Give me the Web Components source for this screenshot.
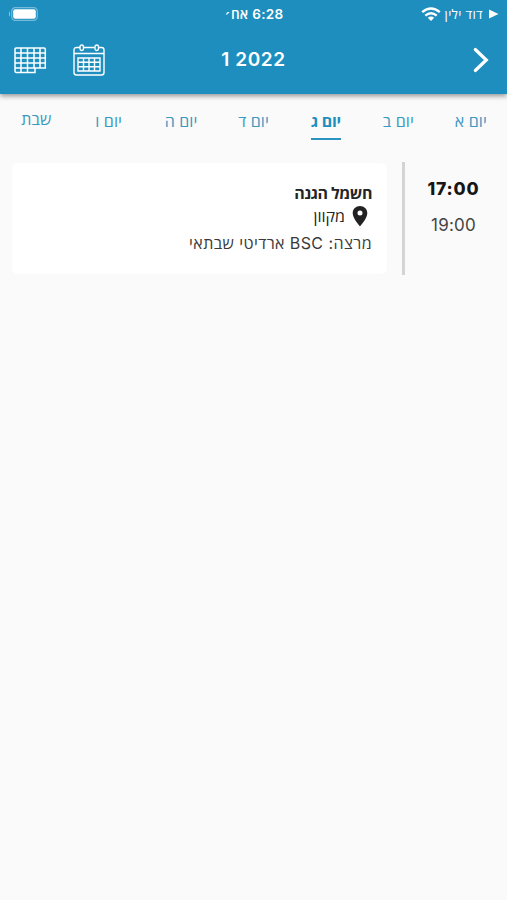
<!DOCTYPE html>
<html lang="he" dir="rtl">
<head>
<meta charset="utf-8">
<meta name="viewport" content="width=device-width">
<title>1 2022</title>
<style>
  body {
    margin: 0;
    background: #fafafa;
    color: #252525;
    font-family: Inter, "Open Sans", "Noto Sans", "DejaVu Sans", sans-serif;
  }
</style>
</head>
<body>
<schedule-app>
  <app-header slot="header" heading="1 2022">
    <status-bar slot="status" carrier="דוד ילין" time="6:28 אח׳"></status-bar>
  </app-header>
  <day-tabs slot="tabs">
    <day-tab>יום א</day-tab>
    <day-tab>יום ב</day-tab>
    <day-tab selected>יום ג</day-tab>
    <day-tab>יום ד</day-tab>
    <day-tab>יום ה</day-tab>
    <day-tab>יום ו</day-tab>
    <day-tab raised>שבת</day-tab>
  </day-tabs>
  <lesson-row start="17:00" end="19:00">
    <span slot="title">חשמל הגנה</span>
    <span slot="place">מקוון</span>
    <span slot="teacher">מרצה: BSC ארדיטי שבתאי</span>
  </lesson-row>
</schedule-app>

<script>
class BaseElement extends HTMLElement {
  constructor() {
    super();
    this.attachShadow({ mode: "open" });
  }

  connectedCallback() {
    this.shadowRoot.innerHTML = this.render();
  }
}

class ScheduleApp extends BaseElement {
  render() {
    return /*html*/`
      <style>
        :host { display: flex; flex-direction: column; height: 900px; overflow: hidden; }
      </style>
      <slot name="header"></slot>
      <slot name="tabs"></slot>
      <slot></slot>`;
  }
}

class StatusBar extends BaseElement {
  render() {
    return /*html*/`
      <style>
        :host {
          display: grid;
          grid-template-columns: 1fr auto 1fr;
          align-items: center;
          height: 27px;
          padding: 0 8px 0 9px;
          font-size: 13px;
        }
        .carrier { display: flex; align-items: center; }
        .name { margin: 0 5px 0 4px; font-size: 13px; font-weight: 500; line-height: 16px; letter-spacing: .35px; }
        .time { font-size: 13.5px; font-weight: 600; line-height: 16px; letter-spacing: .3px; }
        .battery { justify-self: end; }
        svg { display: block; }
      </style>
      <div class="carrier">
        <svg width="11" height="10" viewBox="0 0 11 10"><path d="M1 .5 10.500 5 1 9.500z" fill="#fff"/></svg>
        <span class="name">${this.getAttribute("carrier")}</span>
        <svg width="20" height="14" viewBox="0 0 20 14" fill="none" stroke="#fff" stroke-width="2.4">
          <path d="M1.2 5.2Q10-2.2 18.8 5.2M4.3 8.6Q10 3.8 15.7 8.6"/>
          <path d="M6.8 10.7Q10 8.2 13.2 10.7L10 14z" fill="#fff" stroke="none"/>
        </svg>
      </div>
      <span class="time">${this.getAttribute("time")}</span>
      <svg class="battery" width="30" height="14" viewBox="0 0 30 14">
        <path d="M1 4.500v5Q-.3 9 -.3 7T1 4.500z" fill="#8ac4df"/>
        <rect x="2.7" y=".7" width="25.6" height="12.6" rx="3.6" fill="none" stroke="#76bada" stroke-width="1.2"/>
        <rect x="4.2" y="2.3" width="22.6" height="9.4" rx="2" fill="#fff"/>
      </svg>`;
  }
}

class AppHeader extends BaseElement {
  render() {
    return /*html*/`
      <style>
        :host {
          display: block;
          height: 94px;
          flex: none;
          background: #1e8ebe;
          color: #fff;
          box-shadow: 0 2px 5px rgba(0, 0, 0, .42);
        }
        .bar {
          display: grid;
          grid-template-columns: 1fr auto 1fr;
          align-items: center;
          height: 65px;
          padding: 0 14px;
        }
        .back { margin-right: 4px; }
        h1 { margin: 0; font-size: 19px; font-weight: 600; line-height: 24px; letter-spacing: .6px; direction: ltr; }
        .actions { display: flex; justify-content: flex-end; gap: 26px; }
        svg { display: block; fill: none; stroke: #fff; }
      </style>
      <slot name="status"></slot>
      <div class="bar">
        <svg class="back" width="16" height="26" viewBox="0 0 16 26" stroke-width="3.2" stroke-linecap="round"><path d="M2.300 2.500 13.300 13 2.300 23.500"/></svg>
        <h1>${this.getAttribute("heading")}</h1>
        <div class="actions">
          <svg width="32" height="32" viewBox="0 0 32 32" stroke="#eef8fc" stroke-width="1.4">
            <path d="M7 3.500H3.500Q1 3.500 1 6V28.500Q1 31 3.500 31H28.500Q31 31 31 28.500V6Q31 3.500 28.500 3.500H25.500M10.500 3.500H21.500M1 9.500H31"/>
            <rect x="7" y="1" width="3.500" height="5.500" rx="1.700"/>
            <rect x="22" y="1" width="3.500" height="5.500" rx="1.700"/>
            <path d="M5 14H27V27H5zM5 18.300H27M5 22.700H27M10.500 14V27M16 14V27M21.500 14V27"/>
          </svg>
          <svg width="33" height="32" viewBox="0 0 33 32" stroke="#eef8fc" stroke-width="1.500">
            <path d="M2 4H30Q31.300 4 31.300 5.300V24H21V28.500H2.300Q1 28.500 1 27V5Q1 4 2 4zM1 9H31M1 14H31M1 19H31M1 24H21M7 4V28.500M13.500 4V28.500M20 4V24M26 4V24"/>
          </svg>
        </div>
      </div>`;
  }
}

class DayTabs extends BaseElement {
  render() {
    return /*html*/`
      <style>
        :host { display: grid; grid-template-columns: repeat(7, 1fr); height: 68px; flex: none; }
      </style>
      <slot></slot>`;
  }
}

class DayTab extends BaseElement {
  render() {
    return /*html*/`
      <style>
        :host { display: flex; justify-content: center; align-items: flex-start; color: #3b98c1; font-size: 16px; }
        .label { margin-top: 17px; padding-bottom: 6px; line-height: 21px; border-bottom: 2px solid transparent; white-space: nowrap; font-weight: 500; letter-spacing: .1px; }
        :host([selected]) .label { color: #1e8ebe; border-color: #2b93c1; font-weight: 700; letter-spacing: -.2px; }
        :host([raised]) .label { margin-top: 15px; }
      </style>
      <span class="label"><slot></slot></span>`;
  }
}

class LessonRow extends BaseElement {
  render() {
    return /*html*/`
      <style>
        :host { display: flex; height: 113px; }
        .times {
          display: flex;
          flex-direction: column;
          align-items: center;
          box-sizing: border-box;
          width: 105px;
          padding: 16px 5px 0 0;
          border-left: 3px solid #d4d4d4;
          direction: ltr;
          font-size: 17px;
          line-height: 22px;
        }
        .start { font-weight: 800; font-size: 17.500px; color: #161616; letter-spacing: .85px; }
        .end { margin-top: 14px; color: #444; letter-spacing: .2px; }
        .card {
          flex: 1;
          box-sizing: border-box;
          height: 111px;
          margin: 1px 15px 0 12px;
          padding: 19px 15px 0 0;
          border-radius: 5px;
          background: #fff;
          box-shadow: 0 0 3px rgba(0, 0, 0, .02);
          font-size: 16px;
        }
        .title { height: 22px; line-height: 22px; font-weight: 700; letter-spacing: -.45px; }
        .place { display: flex; align-items: center; gap: 7px; height: 24px; padding-right: 4px; line-height: 23px; }
        .teacher { height: 29px; line-height: 31px; color: #3a3a3a; letter-spacing: .42px; }
        svg { display: block; }
      </style>
      <div class="times">
        <span class="start">${this.getAttribute("start")}</span>
        <span class="end">${this.getAttribute("end")}</span>
      </div>
      <div class="card">
        <div class="title"><slot name="title"></slot></div>
        <div class="place">
          <svg width="16" height="22" viewBox="0 0 16 22">
            <path fill="#222" fill-rule="evenodd" d="M8 1C4 1 .7 4 .7 8.200c0 5.200 7.300 13 7.300 13s7.300-7.800 7.300-13C15.300 4 12 1 8 1zm0 4.500a2.500 2.500 0 1 1 0 5 2.500 2.500 0 0 1 0-5z"/>
          </svg>
          <slot name="place"></slot>
        </div>
        <div class="teacher"><slot name="teacher"></slot></div>
      </div>`;
  }
}

customElements.define("schedule-app", ScheduleApp);
customElements.define("status-bar", StatusBar);
customElements.define("app-header", AppHeader);
customElements.define("day-tabs", DayTabs);
customElements.define("day-tab", DayTab);
customElements.define("lesson-row", LessonRow);
</script>
</body>
</html>
